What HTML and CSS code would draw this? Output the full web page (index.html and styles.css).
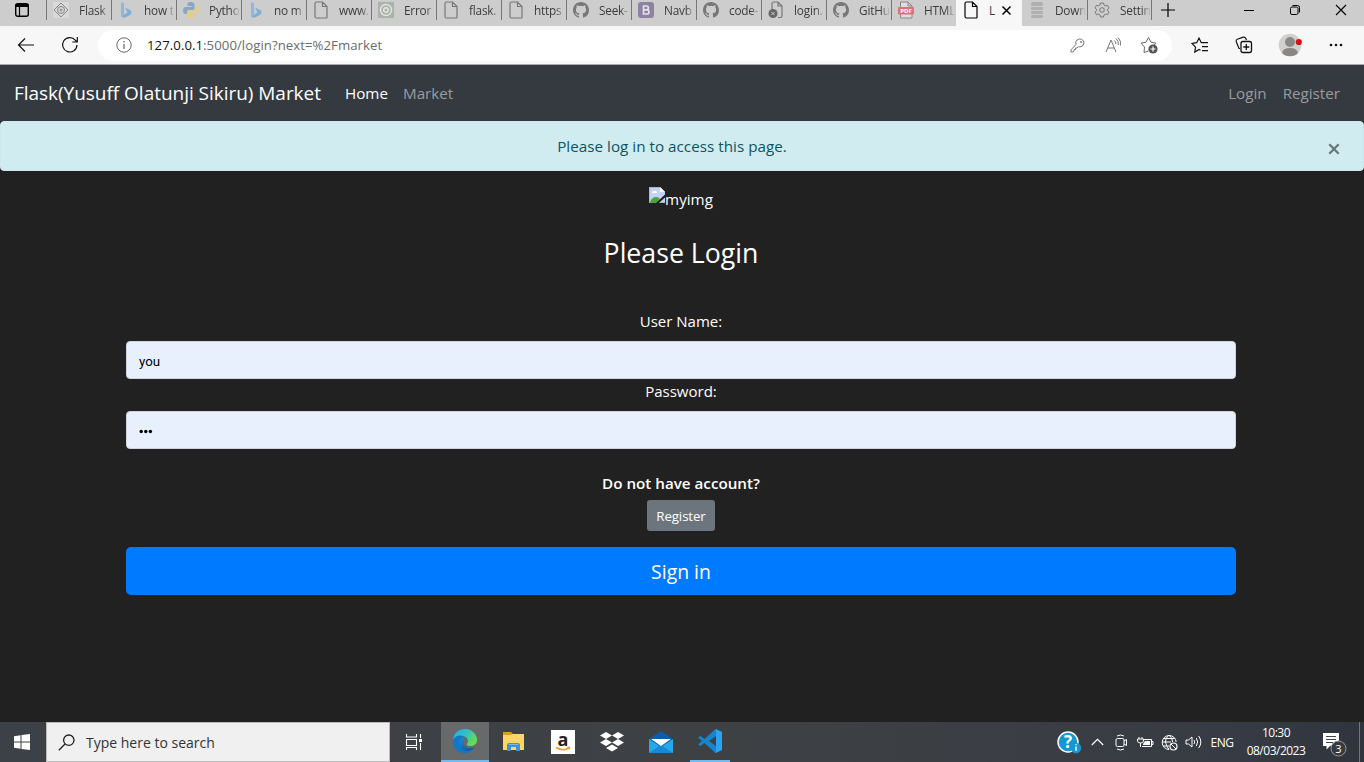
FILE: index.html
```
<!DOCTYPE html>
<html lang="en">
<head>
<meta charset="utf-8">
<title>Login</title>
<link rel="stylesheet" href="styles.css">
</head>
<body>
<svg class="defs" width="0" height="0">
  <defs>
    <symbol id="page" viewBox="0 0 16 18"><path d="M3.500 1H9.500L14 5.500V16.500Q14 17 13.500 17H3.500Q2 17 2 15.500V2.500Q2 1 3.500 1ZM9.500 1V5.500H14" fill="none" stroke="currentColor" stroke-width="1.200"/></symbol>
    <symbol id="bing" viewBox="0 0 16 18"><path d="M3 1 6 2.200V13L3 15.500Z" fill="#8fb6df"/><path d="M7 6.500 13 9.500Q14.500 13 11 14.500L6 17 3 15.300 9.500 11.500Z" fill="#7fafd9"/></symbol>
    <symbol id="github" viewBox="0 0 16 16"><path fill="currentColor" d="M8 0C3.580 0 0 3.580 0 8c0 3.540 2.290 6.530 5.470 7.590.4.070.550-.170.550-.380 0-.190-.010-.820-.010-1.490-2.010.370-2.530-.490-2.690-.940-.090-.230-.480-.940-.820-1.130-.280-.150-.680-.520-.010-.530.630-.010 1.080.580 1.230.820.720 1.210 1.870.870 2.330.660.070-.520.280-.870.510-1.070-1.780-.2-3.640-.890-3.640-3.950 0-.870.310-1.590.820-2.150-.080-.2-.360-1.020.080-2.120 0 0 .670-.210 2.200.820a7.600 7.600 0 0 1 4 0c1.530-1.040 2.200-.820 2.200-.820.440 1.100.160 1.920.080 2.120.510.560.820 1.270.820 2.150 0 3.070-1.870 3.750-3.650 3.950.290.250.540.730.540 1.480 0 1.070-.010 1.930-.010 2.200 0 .210.150.460.550.380A8 8 0 0 0 16 8c0-4.420-3.580-8-8-8Z"/></symbol>
  </defs>
</svg>

<header class="browser">
  <div class="tabs">
    <div class="tab-menu"><svg width="16" height="16" viewBox="0 0 16 16"><rect x="1.700" y="1.700" width="12.600" height="12.600" rx="2" fill="none" stroke="#000" stroke-width="1.400"/><path d="M1.500 2H14.500V5H1.500Z"/><path d="M5.500 5V14" stroke="#000" stroke-width="1.200"/></svg></div>
    <div class="tab"><svg width="16" height="16" viewBox="0 0 16 16"><rect width="16" height="16" fill="#d9d9d9"/><path d="M8 1 15 8 8 15 1 8Z" fill="none" stroke="#888"/><circle cx="8" cy="8" r="3.500" fill="none" stroke="#888"/><circle cx="8" cy="8" r="1.500" fill="#999"/></svg><span>Flask</span></div>
    <div class="tab"><svg width="16" height="18"><use href="#bing"/></svg><span>how t</span></div>
    <div class="tab"><svg width="16" height="16" viewBox="0 0 16 16"><path d="M8 0C4.500 0 4.500 1 4.500 3V4H8.500V5H3C1 5 0 6 0 8.500S1 12 3 12H4V10Q4 8 6 8H10Q11.500 8 11.500 6V3C11.500.800 10 0 8 0Z" fill="#8ba6bf"/><path d="M8 16C11.500 16 11.500 15 11.500 13V12H7.500V11H13C15 11 16 10 16 7.500S15 4 13 4H12.500V6.500Q12.500 9 10 9H6Q4.500 9 4.500 11V13C4.500 15.200 6 16 8 16Z" fill="#e3cf82"/></svg><span>Pytho</span></div>
    <div class="tab"><svg width="16" height="18"><use href="#bing"/></svg><span>no m</span></div>
    <div class="tab"><svg width="16" height="18"><use href="#page"/></svg><span>www.</span></div>
    <div class="tab"><svg width="16" height="16" viewBox="0 0 16 16"><rect width="16" height="16" fill="#a9b3a9"/><circle cx="8" cy="8" r="5.500" fill="none" stroke="#e2e5e2" stroke-width="1.400"/><circle cx="8" cy="8" r="2.300" fill="none" stroke="#e2e5e2" stroke-width="1.500"/></svg><span>Error</span></div>
    <div class="tab"><svg width="16" height="18"><use href="#page"/></svg><span>flask.</span></div>
    <div class="tab"><svg width="16" height="18"><use href="#page"/></svg><span>https</span></div>
    <div class="tab"><svg width="16" height="16"><use href="#github"/></svg><span>Seek-</span></div>
    <div class="tab"><svg width="16" height="16" viewBox="0 0 16 16"><rect width="16" height="16" rx="3" fill="#8d82a0"/><path d="M5.500 4V12H8.800Q11 12 11 9.900T8.800 7.800H5.500H8.400Q10.400 7.800 10.400 5.900T8.400 4Z" fill="none" stroke="#e4e0ea" stroke-width="1.700"/></svg><span>Navb</span></div>
    <div class="tab"><svg width="16" height="16"><use href="#github"/></svg><span>code-</span></div>
    <div class="tab"><svg width="16" height="18" viewBox="0 0 16 18"><path d="M4 8V2.500Q4 1 5.500 1H10L14 5V15Q14 16.500 12.500 16.500H10M10 1V5H14" fill="none" stroke="#777" stroke-width="1.200"/><circle cx="5" cy="12.500" r="4.500" fill="#666"/><path d="M3.500 11 6.500 14M6.500 11 3.500 14" stroke="#ccc"/></svg><span>login.</span></div>
    <div class="tab"><svg width="16" height="16"><use href="#github"/></svg><span>GitHu</span></div>
    <div class="tab"><svg width="16" height="18" viewBox="0 0 16 18"><path d="M2.500 1H10L14 5V17H2.500ZM10 1V5H14" fill="#ddd" stroke="#888"/><rect x="0" y="6" width="16" height="7.500" rx="1" fill="#df7078"/><text x="8" y="12" class="pdf" text-anchor="middle">PDF</text></svg><span>HTML</span></div>
    <div class="tab active"><svg width="16" height="18"><use href="#page"/></svg><span>L</span><svg class="close" width="11" height="11" viewBox="0 0 11 11"><path d="M1.500 1.500 9.500 9.500M9.500 1.500 1.500 9.500" stroke="#000" stroke-width="1.500"/></svg></div>
    <div class="tab after"><svg width="16" height="16" viewBox="0 0 16 16"><g fill="#b0b0b0"><rect x="2" y="0" width="12" height="4" rx="1.500"/><rect x="2" y="5" width="12" height="3" rx="1"/><rect x="2" y="9" width="12" height="3" rx="1"/><rect x="2" y="13" width="12" height="3" rx="1.500"/></g></svg><span>Down</span></div>
    <div class="tab"><svg width="16" height="16" viewBox="0 0 16 16"><path d="M6.500 1H9.500L10 3 11.500 3.900 13.500 3.300 15 5.900 13.500 7.300V8.700L15 10.100 13.500 12.700 11.500 12.100 10 13 9.500 15H6.500L6 13 4.500 12.100 2.500 12.700 1 10.100 2.500 8.700V7.300L1 5.900 2.500 3.300 4.500 3.900 6 3Z" fill="none" stroke="#777" stroke-linejoin="round"/><circle cx="8" cy="8" r="2.300" fill="none" stroke="#777"/></svg><span>Settin</span></div>
    <div class="new-tab"><svg width="16" height="16" viewBox="0 0 16 16"><path d="M8 1V15M1 8H15" stroke="#000" stroke-width="1.200"/></svg></div>
    <div class="window-buttons">
      <svg width="12" height="12" viewBox="0 0 12 12"><path d="M1 6.500H11" stroke="#000"/></svg>
      <svg width="12" height="12" viewBox="0 0 12 12"><rect x="1.500" y="3" width="7.500" height="7.500" rx="1.500" fill="none" stroke="#000"/><path d="M3.500 1.500H8.500Q10.500 1.500 10.500 3.500V8.500" fill="none" stroke="#000"/></svg>
      <svg width="12" height="12" viewBox="0 0 12 12"><path d="M1 1 11 11M11 1 1 11" stroke="#000" stroke-width="1.100"/></svg>
    </div>
  </div>
  <div class="toolbar">
    <div class="tool"><svg width="18" height="18" viewBox="0 0 18 18"><path d="M17 9H1.500M8 2.500 1.500 9 8 15.500" fill="none" stroke="#111" stroke-width="1.200"/></svg></div>
    <div class="tool"><svg width="18" height="18" viewBox="0 0 18 18"><path d="M16 9A7.200 7.200 0 1 1 14.300 4.100L16 6M16.300 1V6H11.300" fill="none" stroke="#111" stroke-width="1.200"/></svg></div>
    <div class="address">
      <svg width="16" height="16" viewBox="0 0 16 16"><circle cx="8" cy="8" r="7.200" fill="none" stroke="#666"/><path d="M8 7V12M8 4V5.500" stroke="#666" stroke-width="1.200"/></svg>
      <div class="url"><b>127.0.0.1</b>:5000/login?next=%2Fmarket</div>
      <div class="inner-tool"><svg width="15" height="15" viewBox="0 0 15 15"><path d="M6 6.500Q5 3.500 7 2 9 .300 11.500 1.300T14 5Q13.500 8 11 8.700 9.500 9 8.300 8.700L7 10H5.500V11.500H4V13L3 14H1V11.800Z" fill="none" stroke="#777"/><circle cx="11" cy="4" r=".9" fill="#777"/></svg></div>
      <div class="inner-tool"><svg width="17" height="16" viewBox="0 0 17 16"><path d="M1 15 6 3 11 15M2.700 11H9.300M9.500 3.500Q11 5 10.800 7M11 1.500Q14 4 13.300 8M13 .500Q16.500 4 15.500 8.500" fill="none" stroke="#777"/></svg></div>
      <div class="inner-tool last"><svg width="18" height="18" viewBox="0 0 18 18"><path d="M8.500 15 4 16.500 4.500 11 1 7.200 6 6.200 8.500 1.500 11 6.200 16 7.200 14 9.200" fill="none" stroke="#666"/><circle cx="13" cy="13" r="4.600" fill="#555"/><path d="M13 10.500V15.500M10.500 13H15.500" stroke="#fff" stroke-width="1.200"/></svg></div>
    </div>
    <div class="tool right"><svg width="18" height="18" viewBox="0 0 18 18"><path d="M9.500 14.300 8 13.500 3.800 16 4.500 11.200 1 7.500 5.700 6.700 8 2 10.300 6.700H17M11 10.700H17M11 14.700H17" fill="none" stroke="#111" stroke-width="1.200"/></svg></div>
    <div class="tool"><svg width="18" height="18" viewBox="0 0 18 18"><path d="M5 12.500H4L1.200 5.500Q.800 4 2.300 3.300L8.300 1.200Q10 .800 10.800 2.500L11.500 4" fill="none" stroke="#111" stroke-width="1.200"/><rect x="6" y="5.500" width="10.500" height="11" rx="2" fill="none" stroke="#111" stroke-width="1.300"/><path d="M11.300 8V14M8.300 11H14.300" stroke="#111" stroke-width="1.300"/></svg></div>
    <div class="tool profile"><svg width="24" height="24" viewBox="0 0 24 24"><circle cx="12" cy="12" r="11.300" fill="#d2d0ce"/><circle cx="12" cy="9" r="5" fill="#8a8886"/><path d="M4 20Q5 15 12 15T20 20Q17 23.300 12 23.300T4 20Z" fill="#8a8886"/><circle cx="20.800" cy="9" r="3.100" fill="#d80f16"/></svg></div>
    <div class="tool"><svg width="16" height="4" viewBox="0 0 16 4"><g fill="#111"><circle cx="3" cy="2" r="1.300"/><circle cx="8" cy="2" r="1.300"/><circle cx="13" cy="2" r="1.300"/></g></svg></div>
  </div>
</header>

<nav class="navbar">
  <a class="brand">Flask(Yusuff Olatunji Sikiru) Market</a>
  <a class="link home">Home</a>
  <a class="link market">Market</a>
  <a class="link login">Login</a>
  <a class="link register">Register</a>
</nav>
<div class="alert"><span class="message">Please log in to access this page.</span><span class="dismiss"><svg width="12" height="12" viewBox="0 0 12 12"><path d="M1.300 1.300 10.700 10.700M10.700 1.300 1.300 10.700" stroke="#697679" stroke-width="2.300"/></svg></span></div>

<main class="login-page">
  <div class="picture"><svg width="16" height="16" viewBox="0 0 16 16"><path d="M0 0H11L16 5V16H0Z" fill="#c4d3f4"/><path d="M.500 16V.500H11L15.500 5" fill="none" stroke="#b4b4bc"/><path d="M11 0V5H16Z" fill="#f6f8ff"/><path d="M3 5.500Q4 3 6 4 8 3.500 8 6H3Z" fill="#fff"/><path d="M1 15Q3 10 7 10 10 10 11 12L8 16H1Z" fill="#4ca63c"/><path d="M16 7.500 7 16H10L16 10.500Z" fill="#212121"/><path d="M11 15.500H16" stroke="#b4b4bc"/></svg><span>myimg</span></div>
  <h1>Please Login</h1>
  <form class="form">
    <label>User Name:</label>
    <div class="field">you</div>
    <label>Password:</label>
    <div class="field"><svg width="15" height="5" viewBox="0 0 15 5"><g fill="#000"><circle cx="2.200" cy="2.500" r="1.700"/><circle cx="6.800" cy="2.500" r="1.700"/><circle cx="11.400" cy="2.500" r="1.700"/></g></svg></div>
    <strong class="question">Do not have account?</strong>
    <a class="small-button">Register</a>
    <a class="submit">Sign in</a>
  </form>
</main>

<footer class="taskbar">
  <div class="start"><svg width="16" height="16" viewBox="0 0 16 16"><path d="M0 2.300 6.500 1.300V7.500H0ZM7.500 1.100 16 0V7.500H7.500ZM0 8.500H6.500V14.700L0 13.700ZM7.500 8.500H16V16L7.500 14.900Z" fill="#fff"/></svg></div>
  <div class="search"><svg width="17" height="17" viewBox="0 0 17 17"><circle cx="10.800" cy="6.200" r="5.200" fill="none" stroke="#222" stroke-width="1.300"/><path d="M7 10 .800 16.200" stroke="#222" stroke-width="1.300"/></svg><span>Type here to search</span></div>
  <div class="task view"><svg width="18" height="16" viewBox="0 0 18 16"><path d="M1.500 0V3H11.500V0M1.500 5.500H11.500V11.500H1.500ZM1.500 16V13.500H11.500V16M15.500 0V4M15.500 9V16" fill="none" stroke="#fff" stroke-width="1.100"/><rect x="14" y="5" width="3" height="3" fill="#fff"/></svg></div>
  <div class="task current"><svg width="26" height="26" viewBox="0 0 26 26"><defs><linearGradient id="eg" x1="0" y1="0" x2="1" y2=".5"><stop offset="0" stop-color="#1faee9"/><stop offset=".6" stop-color="#35c3bd"/><stop offset="1" stop-color="#68dc4f"/></linearGradient><linearGradient id="eb" x1="0" y1="0" x2="1" y2="1"><stop offset="0" stop-color="#1c8fdc"/><stop offset="1" stop-color="#124b91"/></linearGradient></defs><path d="M1 13C1 5 7 1 13 1 21 1 25 7 25 12 25 16 22 18 18 18 15 18 14 16.500 15.500 15 17 12 15 9 11 8 6 7 2 9 1 13Z" fill="url(#eg)"/><path d="M1 13C2 8.500 7 7 11 8.300 9 9.500 8 12 9 15.500 10.500 20 16 22.500 22.500 19.500 20 24 16 25 13 25 6 25 1 20 1 13Z" fill="#0e79ca"/><path d="M10.800 9.500C7 11 6 16 9 20 12 24 17 24 22.500 19.500 16 21.500 12 18.500 11.500 15 11.300 13 12.500 12 13.500 10.800Z" fill="url(#eb)"/></svg></div>
  <div class="task"><svg width="24" height="22" viewBox="0 0 24 22"><path d="M1 1H9L11 3H22V8H1Z" fill="#d99e21"/><path d="M1 4H9L11 3H22V19H1Z" fill="#ffd566"/><path d="M5 20V14Q5 12 7 12H16Q18 12 18 14V20H14V16H9V20Z" fill="#4191d5"/><path d="M7 13H16V14H7Z" fill="#79b9e9"/></svg></div>
  <div class="task"><svg width="24" height="24" viewBox="0 0 24 24"><rect width="24" height="24" fill="#fff"/><text x="12" y="15.500" text-anchor="middle" class="letter-a">a</text><path d="M5 17.500Q12 21.500 18 18" fill="none" stroke="#f49a21" stroke-width="1.500"/><path d="M16 17.300 19 17 18 19.500" fill="none" stroke="#f49a21"/></svg></div>
  <div class="task"><svg width="24" height="22" viewBox="0 0 24 22"><g fill="#fff"><path d="M6 1 12 4.500 6 8 0 4.500ZM18 1 24 4.500 18 8 12 4.500ZM6 8 12 11.500 6 15 0 11.500ZM18 8 24 11.500 18 15 12 11.500ZM12 13.500 18 17 12 20.500 6 17Z"/></g></svg></div>
  <div class="task"><svg width="24" height="24" viewBox="0 0 24 24"><path d="M0 9 12 1 24 9V23H0Z" fill="#0d5ba9"/><path d="M0 9 12 17 24 9V23H0Z" fill="#26a9ea"/><path d="M0 23 12 15 24 23Z" fill="#1589d5"/><path d="M2 9H22L12 16Z" fill="#fff"/></svg></div>
  <div class="task running"><svg width="24" height="24" viewBox="0 0 24 24"><path d="M17.500 0 24 3V21L17.500 24 6.500 14 2.500 17 .500 16V15L4 12 .500 9V8L2.500 7 6.500 10ZM18 7 11 12 18 17Z" fill="#1684cf" fill-rule="evenodd"/><path d="M17.500 0 24 3V21L17.500 24Q18 23.500 18 22V2Q18 .500 17.500 0Z" fill="#2aa4ef"/></svg></div>
  <div class="tray">
    <div class="help"><svg width="25" height="24" viewBox="0 0 25 24"><circle cx="11" cy="11" r="10" fill="#1597d3" stroke="#fff" stroke-width="1.500"/><text x="11" y="17" text-anchor="middle" class="mark">?</text><circle cx="19" cy="17" r="5.200" fill="#1597d3"/><path d="M19 15.500V20M19 13V14.300" stroke="#fff" stroke-width="1.300"/></svg></div>
    <div class="tray-item"><svg width="13" height="8" viewBox="0 0 13 8"><path d="M.800 7 6.500 1.300 12.200 7" fill="none" stroke="#fff" stroke-width="1.200"/></svg></div>
    <div class="tray-item"><svg width="13" height="17" viewBox="0 0 13 17"><rect x="1" y="4.500" width="8" height="8" rx="1.500" fill="none" stroke="#fff"/><path d="M9 7 11.500 5.500V11.500L9 10M2 2Q5.500 0 9 2M2 15Q5.500 17 9 15" fill="none" stroke="#fff"/></svg></div>
    <div class="tray-item"><svg width="17" height="13" viewBox="0 0 17 13"><path d="M7 3.500H14.500V10.500H5M14.500 5.500H16V8.500H14.500M2 1V3M5 1V3M.500 3H6.500V5Q6.500 7 3.500 7T.500 5ZM3.500 7V11" fill="none" stroke="#fff"/><path d="M8 5H13V9H6V8Z" fill="#fff"/></svg></div>
    <div class="tray-item"><svg width="17" height="17" viewBox="0 0 17 17"><path d="M8 15.500A7 7 0 1 1 15.200 8M8 1Q4 4 4.500 8T8 15.500M8 1Q11.500 4 11.700 8M1 8H10M2 4.500H14M2 12H8" fill="none" stroke="#fff"/><circle cx="12.500" cy="12.500" r="3.500" fill="none" stroke="#fff" stroke-width="1.200"/><path d="M10 10 15 15" stroke="#fff"/></svg></div>
    <div class="tray-item"><svg width="17" height="14" viewBox="0 0 17 14"><path d="M1 5H3.500L7 2V12L3.500 9H1ZM9 5Q10.500 7 9 9M11.300 3Q14 7 11.300 11M13.700 1Q18 7 13.700 13" fill="none" stroke="#fff"/></svg></div>
    <div class="language">ENG</div>
    <div class="clock"><span>10:30</span><span class="date">08/03/2023</span></div>
    <div class="notices"><svg width="26" height="28" viewBox="0 0 26 28"><path d="M1 3H17V16H8L4.500 19.500V16H1Z" fill="#fff"/><path d="M4 6.500H14M4 9.500H14M4 12.500H11" stroke="#40454b"/><circle cx="16.500" cy="18.500" r="7.500" fill="#373b41" stroke="#999"/><text x="16.500" y="22.500" text-anchor="middle" class="count">3</text></svg></div>
  </div>
</footer>
</body>
</html>
```

FILE: styles.css
```
* { box-sizing: border-box; }
body { margin: 0; width: 1364px; height: 762px; overflow: hidden; display: flex; flex-direction: column; background: #212121; color: #fff; font-family: "Open Sans", "Noto Sans", sans-serif; font-size: 15.2px; }
svg { display: block; flex: none; }
.defs { display: none; }

.browser { height: 65px; background: #f7f7f7; color: #333; border-bottom: 1px solid #aaa; }
.tabs { height: 26px; display: flex; background: #cdcdcd; }
.tab-menu { width: 46px; height: 20px; padding: 2px 0 0 14px; }
.tab { width: 65px; height: 20px; display: flex; align-items: center; gap: 10px; padding-left: 6px; border-left: 1px solid #777; color: #777; }
.tab span { width: 31px; white-space: nowrap; color: #3c3c3c; font-size: 11.8px; line-height: 18px; letter-spacing: -0.2px; -webkit-mask-image: linear-gradient(90deg, #000 70%, transparent); mask-image: linear-gradient(90deg, #000 70%, transparent); }
.tab.active { width: 66px; height: 26px; padding: 0 0 6px 7px; border: 0; background: #f7f7f7; color: #000; }
.tab.active span { width: 7px; margin-left: 0; -webkit-mask-image: none; mask-image: none; }
.tab.active .close { margin-left: -5px; }
.tab.after { border-left-color: transparent; }
.new-tab { height: 20px; padding: 2px 0 0 8px; margin-left: -1px; border-left: 1px solid #777; }
.window-buttons { display: flex; height: 20px; align-items: center; gap: 34px; margin-left: auto; padding-right: 17px; }

.toolbar { height: 38px; display: flex; align-items: center; padding: 0 6px 0 4px; }
.tool { width: 44px; display: flex; justify-content: center; }
.tool.right { margin-left: 6px; }
.tool.profile { width: 48px; }
.address { flex: 1; height: 31px; margin-left: 6px; padding: 0 3px 0 18px; display: flex; align-items: center; border-radius: 16px; background: #fff; }
.url { flex: 1; margin-left: 15px; color: #6b6b6b; font-size: 13.2px; letter-spacing: 0.05px; }
.url b { color: #111; font-weight: 400; }
.inner-tool { width: 36px; display: flex; justify-content: center; }
.inner-tool.last { width: 38px; padding-right: 2px; }
.pdf { fill: #fff; font: bold 6px "Open Sans", sans-serif; }

.navbar { height: 56px; display: flex; align-items: center; padding: 0 24px 1px 14px; background: #343a40; white-space: nowrap; }
.brand { width: 331px; padding-top: 1px; font-size: 19px; letter-spacing: -0.03px; }
.link { color: #999c9f; }
.home { width: 58px; color: #fff; }
.login { margin-left: auto; }
.register { margin-left: 16px; }

.alert { height: 50px; display: flex; align-items: center; padding: 0 23px 0 20px; border: 1px solid #c9e8ed; border-radius: 4px; background: #d1ecf1; color: #0c5460; }
.message { flex: 1; padding: 0 5px 1px 0; text-align: center; letter-spacing: 0.03px; }
.dismiss { padding-top: 6px; }

.login-page { flex: 1; display: flex; flex-direction: column; align-items: center; padding: 16px 128px 0 126px; }
.picture { height: 25px; display: flex; align-items: flex-start; }
.picture span { line-height: 24px; }
h1 { margin: 23px 0 0; font-size: 26.7px; line-height: 35px; font-weight: 400; }
.form { align-self: stretch; margin-top: 39px; display: flex; flex-direction: column; align-items: center; }
label { height: 32px; line-height: 25px; font-size: 15px; }
.field { align-self: stretch; height: 38px; display: flex; align-items: center; padding: 3px 12px 0; border: 1px solid #ced4da; border-radius: 4px; background: #e8f0fe; color: #000; font: 13.3px Roboto, sans-serif; }
.question { margin-top: 22px; height: 29px; line-height: 25px; font-weight: 600; }
.small-button { width: 68px; height: 31px; line-height: 32px; text-align: center; border-radius: 3px; background: #6c757d; font-size: 13.3px; letter-spacing: -0.1px; }
.submit { align-self: stretch; height: 48px; margin-top: 16px; line-height: 50px; text-align: center; border-radius: 5px; background: #007bff; font-size: 19.4px; }

.taskbar { height: 40px; display: flex; background: linear-gradient(90deg, #3c4147, #3e4144 55%, #373b43 90%, #30343d); }
.start { width: 46px; display: flex; align-items: center; padding-left: 14px; }
.search { width: 344px; display: flex; align-items: center; gap: 11px; padding-left: 11px; border: 1px solid #bbb; background: #f0f0f0; color: #333; font-size: 14px; }
.task { width: 49px; display: flex; align-items: center; justify-content: center; }
.view { width: 48px; margin-right: 3px; }
.current { width: 48px; background: #67696b; border-bottom: 2px solid #76b9ed; }
.running { width: 40px; margin-left: 5px; border-bottom: 2px solid #76b9ed; }
.letter-a { fill: #222; font: bold 18px "Open Sans", sans-serif; }
.mark { fill: #fff; font: bold 17px "Open Sans", sans-serif; }
.count { fill: #fff; font: 11px "Open Sans", sans-serif; }
.tray { margin-left: auto; display: flex; align-items: center; }
.help { width: 28px; padding-top: 2px; margin-left: -1px; }
.tray-item { width: 24px; display: flex; justify-content: center; }
.language { width: 34px; text-align: center; font-size: 12px; letter-spacing: -0.4px; }
.clock { width: 74px; display: flex; flex-direction: column; align-items: center; font-size: 12px; line-height: 18px; letter-spacing: -0.5px; }
.date { letter-spacing: -0.5px; }
.notices { width: 47px; height: 40px; display: flex; align-items: center; padding: 4px 0 0 9px; border-right: 1px solid #74777c; margin-right: 4px; }
```
